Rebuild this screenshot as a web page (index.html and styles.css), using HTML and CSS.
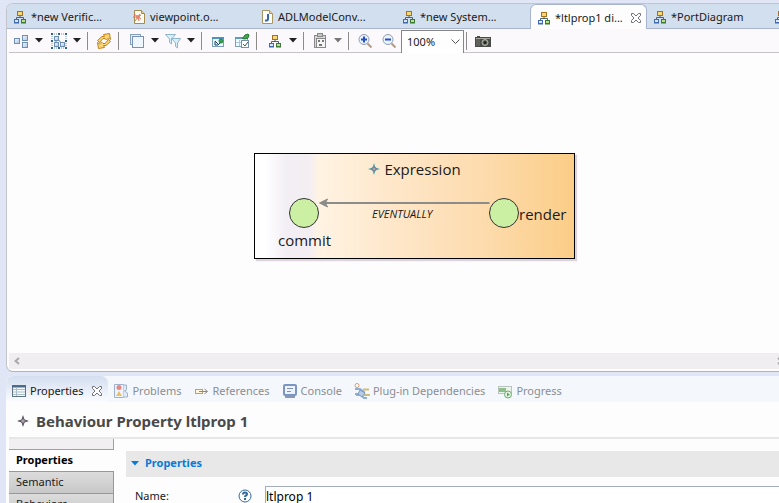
FILE: index.html
```html
<!DOCTYPE html>
<html lang="en">
<head>
<meta charset="utf-8">
<title>Diagram editor</title>
<link rel="stylesheet" href="styles.css">
</head>
<body>
<svg class="defs" aria-hidden="true">
  <defs>
    <linearGradient id="blue" x1="0" y1="0" x2="1" y2="1"><stop offset="0" stop-color="#f4f9ff"/><stop offset="1" stop-color="#a9c5e4"/></linearGradient>
    <symbol id="tree" viewBox="0 0 16 16">
      <path d="M8 6v3M4.500 11V8.500h7V11" fill="none" stroke="#4b6070"/>
      <rect x="5.500" y="2.500" width="5" height="4" fill="#f7d878" stroke="#a4711d"/>
      <rect x="2.500" y="10.500" width="4" height="3" fill="#d9e8ff" stroke="#416bb0"/>
      <rect x="9.500" y="10.500" width="4" height="3" fill="#b9df91" stroke="#3a7a35"/>
      <path d="M2 14h5" stroke="#416bb0"/><path d="M9 14h5" stroke="#3a7a35"/>
    </symbol>
    <symbol id="caret" viewBox="0 0 8 5"><path d="M0 0h8L4 4.500z" fill="currentColor"/></symbol>
    <symbol id="cross" viewBox="0 0 12 12"><path d="M1.500 1.500h2L6 4l2.500-2.500h2v2L8 6l2.500 2.500v2h-2L6 8l-2.500 2.500h-2v-2L4 6 1.500 3.500z" fill="#fff" stroke="#707078"/></symbol>
    <symbol id="star" viewBox="0 0 12 12"><path d="M6 0l1.500 4.500L12 6 7.500 7.500 6 12 4.500 7.500 0 6l4.500-1.500z" fill="currentColor"/><path d="M6 3.500L8.500 6 6 8.500 3.500 6z" fill="#a8a0ae" stroke="#716b79"/></symbol>
  </defs>
</svg>

<main class="workbench">
  <section class="editor">
    <nav class="editor-tabs">
      <button class="tab"><svg class="icon"><use href="#tree"/></svg>*new Verific...</button>
      <button class="tab"><svg class="icon" viewBox="0 0 16 16"><path d="M3.500 1.500h7l3 3v10h-10z" fill="#fffdf2" stroke="#a58b4c"/><path d="M10.500 1.500v3h3" fill="#f2d894" stroke="#a58b4c"/><path d="M10 6L7 8l2-3M7 8L3 5M7 8H2M7 8l-3 4M7 8l1 4M7 8l3 2" fill="none" stroke="#e0705d"/><circle cx="7" cy="8" r="2" fill="#e8836f"/></svg>viewpoint.o...</button>
      <button class="tab"><svg class="icon" viewBox="0 0 16 16"><path d="M3.500 1.500h7l3 3v10h-10z" fill="#fff" stroke="#aa9561"/><path d="M10.500 1.500v3h3" fill="#f2d894" stroke="#aa9561"/><path d="M9 5v5q0 2-3 1.500" fill="none" stroke="#3168a4" stroke-width="2"/></svg>ADLModelConv...</button>
      <button class="tab"><svg class="icon"><use href="#tree"/></svg>*new System...</button>
      <button class="tab tab-active"><svg class="icon"><use href="#tree"/></svg>*ltlprop1 di...<svg class="close"><use href="#cross"/></svg></button>
      <button class="tab"><svg class="icon"><use href="#tree"/></svg>*PortDiagram</button>
      <button class="tab" aria-label="More"><svg class="icon"><use href="#tree"/></svg></button>
    </nav>

    <div class="toolbar">
      <button class="tool" aria-label="Arrange"><svg class="icon" viewBox="0 0 16 16"><g fill="url(#blue)" stroke="#6f8eb5"><rect x="1.500" y="5.500" width="5" height="5"/><rect x="9.500" y="2.500" width="5" height="5"/><rect x="9.500" y="9.500" width="5" height="5"/></g></svg></button>
      <button class="drop" aria-label="Arrange options"><svg class="caret"><use href="#caret"/></svg></button>
      <button class="tool tool-spaced" aria-label="Select"><svg class="icon" viewBox="0 0 16 16"><path d="M6 5l5 6M5 6v5" stroke="#54799d"/><g fill="url(#blue)" stroke="#6f8eb5"><rect x="3.500" y="3.500" width="4" height="4"/><rect x="3.500" y="9.500" width="4" height="4"/><rect x="9.500" y="9.500" width="4" height="4"/></g><path d="M0 0h2v2H0zM7 0h2v2H7zM14 0h2v2h-2zM0 7h2v2H0zM14 7h2v2h-2zM0 14h2v2H0zM7 14h2v2H7zM14 14h2v2h-2z" fill="#315f90"/><path d="M3 1h3M10 1h3M3 15h3M10 15h3M1 3v3M1 10v3M15 3v3M15 10v3" stroke="#7894ac" stroke-dasharray="1 1"/></svg></button>
      <button class="drop" aria-label="Select options"><svg class="caret"><use href="#caret"/></svg></button>
      <span class="sep"></span>
      <button class="tool" aria-label="Refresh"><svg class="icon" viewBox="0 0 16 16"><g fill="#f9d672" stroke="#c38018"><path d="M3.500 9.500L1.500 7.500 6 3.500H8.500L7.500 1.500l6-1 1 6-2-1.500L10.500 7 9 5.500H7z"/><path d="M12.500 6.500l2 2L10 12.500H7.500l1 2-6 1-1-6 2 1.500L5.500 9 7 10.500h2z"/></g></svg></button>
      <span class="sep sep-tight"></span>
      <button class="tool" aria-label="Layers"><svg class="icon" viewBox="0 0 16 16"><rect x="1.500" y="1.500" width="10" height="10" fill="#e6effa" stroke="#879ebd"/><rect x="3.500" y="3.500" width="11" height="11" fill="#edf7fd" stroke="#7892b4"/></svg></button>
      <button class="drop" aria-label="Layer options"><svg class="caret"><use href="#caret"/></svg></button>
      <button class="tool" aria-label="Filters"><svg class="icon" viewBox="0 0 16 16"><g fill="#d9eff8" stroke="#8fb5cd"><path d="M.500 1.500h10L6.500 6v5l-2-1.500V6z"/><path d="M6.500 5.500h9L12.500 10v5l-2-1.500V10z"/></g></svg></button>
      <button class="drop" aria-label="Filter options"><svg class="caret"><use href="#caret"/></svg></button>
      <span class="sep"></span>
      <button class="tool" aria-label="Show in window"><svg class="icon" viewBox="0 0 16 16"><rect x="2.500" y="4.500" width="11" height="9" fill="#edf7ff" stroke="#7a9db9"/><path d="M2 5h12" stroke="#4f93c4" stroke-width="2"/><path d="M5 8l4 4M5 12V8.500M5 12h3l3-3" fill="none" stroke="#173f67"/><circle cx="11" cy="8" r="2" fill="#36a451" stroke="#217f42"/></svg></button>
      <button class="tool" aria-label="Pin selection"><svg class="icon" viewBox="0 0 16 16"><rect x="1.500" y="4.500" width="12" height="9" fill="#f2f9ff" stroke="#7a9db9"/><path d="M1 5h13" stroke="#5b9bca" stroke-width="2"/><path d="M5.500 7v6M2 9.500h6" stroke="#a9c8df"/><path d="M8.500 5.500L11 2l3-1 1 1-1 3-3 1z" fill="#45a64c" stroke="#267c37"/><rect x="7.500" y="7.500" width="7" height="7" fill="#fff" stroke="#7790a5"/><path d="M9 11l2 2 3-4" fill="none" stroke="#34566f"/></svg></button>
      <span class="sep sep-tight"></span>
      <button class="tool" aria-label="Hierarchy"><svg class="icon"><use href="#tree"/></svg></button>
      <button class="drop" aria-label="Hierarchy options"><svg class="caret"><use href="#caret"/></svg></button>
      <span class="sep"></span>
      <button class="tool" aria-label="Paste"><svg class="icon" viewBox="0 0 16 16"><rect x="2.500" y="2.500" width="11" height="12" fill="#d8d8d8" stroke="#8b8b8b"/><rect x="5.500" y=".5" width="5" height="3" fill="#c8c8c8" stroke="#888"/><rect x="4.500" y="5.500" width="9" height="9" fill="#f4f4f4" stroke="#888"/><path d="M6 7h2v2H6zM10 7h2v2h-2zM7 11h3v2H7z" fill="#777"/></svg></button>
      <button class="drop drop-muted" aria-label="Paste options"><svg class="caret"><use href="#caret"/></svg></button>
      <span class="sep"></span>
      <button class="tool" aria-label="Zoom in"><svg class="icon" viewBox="0 0 16 16"><path d="M10.500 10.500l4 4" stroke="#b99880" stroke-width="2"/><circle cx="7" cy="6.500" r="5" fill="#eaf4ff" stroke="#8f9dad"/><path d="M4 6.500h6M7 3.500v6" stroke="#294fc4" stroke-width="2"/></svg></button>
      <button class="tool" aria-label="Zoom out"><svg class="icon" viewBox="0 0 16 16"><path d="M10.500 10.500l4 4" stroke="#b99880" stroke-width="2"/><circle cx="7" cy="6.500" r="5" fill="#eaf4ff" stroke="#8f9dad"/><path d="M4 6.500h6" stroke="#294fc4" stroke-width="2"/></svg></button>
      <div class="zoom">
        <select aria-label="Zoom level"><option>100%</option></select>
        <svg class="chevron" viewBox="0 0 9 6"><path d="M.500 .5l4 4 4-4" fill="none" stroke="#555"/></svg>
      </div>
      <span class="sep sep-camera"></span>
      <button class="tool" aria-label="Export image"><svg class="icon" viewBox="0 0 16 16"><path d="M0 4h2V3h3v1h11v10H0z" fill="#4a4a48"/><path d="M2 6v7M4 6v7" stroke="#777"/><path d="M1 5.500h14" stroke="#a5a59c"/><circle cx="10" cy="9.500" r="3" fill="#65705f" stroke="#b1b5ac"/><circle cx="10" cy="9.500" r="1.500" fill="#222"/></svg></button>
    </div>

    <div class="canvas">
      <div class="container-node">
        <h1 class="container-title"><svg class="star star-teal"><use href="#star"/></svg>Expression</h1>
        <svg class="edge" viewBox="0 0 172 10"><path d="M4 5h168" stroke="#8c8c8a" stroke-width="2"/><path d="M10 1L2 5l8 4L8 5z" fill="#8c8c8a" stroke="#8c8c8a"/></svg>
        <span class="edge-label">EVENTUALLY</span>
        <span class="state state-commit"></span>
        <span class="state-label label-commit">commit</span>
        <span class="state state-render"></span>
        <span class="state-label label-render">render</span>
      </div>
    </div>
    <div class="scrollbar"><svg class="arrow" viewBox="0 0 6 8"><path d="M5 1L1.500 4 5 7" fill="none" stroke="#aaa" stroke-width="2"/></svg><svg class="arrow" viewBox="0 0 6 8"><path d="M1 1l3.500 3L1 7" fill="none" stroke="#aaa" stroke-width="2"/></svg></div>
  </section>

  <section class="views">
    <nav class="view-tabs">
      <button class="view-tab view-active"><svg class="icon" viewBox="0 0 16 16"><rect x="1.500" y="2.500" width="13" height="11" fill="#f4faff" stroke="#5f7384"/><path d="M1 3.500h14" stroke="#496985" stroke-width="2"/><path d="M5.500 4v9M2 6.500h12M2 9h12M2 11.500h12" stroke="#a9bdca"/></svg>Properties<svg class="close"><use href="#cross"/></svg></button>
      <button class="view-tab"><svg class="icon" viewBox="0 0 16 16"><path d="M1.500 1.500h9v13h-9z" fill="#eef4fb" stroke="#9eb2ce"/><path d="M10.500 2h3v5l-2 1 3 2v4h-4" fill="#e1ebf6" stroke="#9eb2ce"/><circle cx="6" cy="4.500" r="2.500" fill="#e88782"/><path d="M6 8l3 5H3z" fill="#efbd63"/></svg>Problems</button>
      <button class="view-tab"><svg class="icon" viewBox="0 0 16 16"><rect x="2.500" y="6.500" width="7" height="4" fill="#fff6dd" stroke="#b9a176"/><path d="M6 8.500h8M11.500 6l3 2.500-3 2.500" fill="none" stroke="#8c8b82"/></svg>References</button>
      <button class="view-tab"><svg class="icon" viewBox="0 0 16 16"><rect x="2" y="2" width="12" height="10" rx="1" fill="#edf4ff" stroke="#7b96c2" stroke-width="2"/><path d="M5 5.500h6M5 8.500h4" stroke="#8091ad"/><path d="M3 14h10" stroke="#8999b5" stroke-width="2"/></svg>Console</button>
      <button class="view-tab"><svg class="icon" viewBox="0 0 16 16"><circle cx="3" cy="2.500" r="2" fill="#fff" stroke="#d29b77"/><path d="M9 6.500h6M10 12h6" fill="none" stroke="#d2bb78" stroke-width="2"/><path d="M1 6h5l4 3-2 2H1M2 12h5l3 3h3" fill="none" stroke="#8eaed3" stroke-width="2"/><path d="M6 7l5 3-3 4-4-3z" fill="#b5cde8" stroke="#7899bf"/></svg>Plug-in Dependencies</button>
      <button class="view-tab"><svg class="icon" viewBox="0 0 16 16"><rect x="1.500" y="3.500" width="13" height="7" fill="#eef3ec" stroke="#b9c4bd"/><path d="M2 5h7v4H2z" fill="#8dbe8c"/><circle cx="11" cy="11.500" r="3.500" fill="#e6f5e2" stroke="#68ad70"/><path d="M10 9.500l3 2-3 2z" fill="#57a461"/></svg>Progress</button>
    </nav>

    <h2 class="view-title"><svg class="star star-dark"><use href="#star"/></svg>Behaviour Property ltlprop 1</h2>

    <div class="sheet">
      <nav class="side-tabs">
        <span class="side-head"></span>
        <button class="side-tab side-active">Properties</button>
        <button class="side-tab">Semantic</button>
        <button class="side-tab">Behaviors</button>
      </nav>
      <div class="form">
        <button class="section-head"><svg class="caret"><use href="#caret"/></svg>Properties</button>
        <div class="field">
          <label for="name">Name:</label>
          <svg class="help" viewBox="0 0 14 14"><circle cx="7" cy="7" r="6" fill="#fff" stroke="#316a9c"/><path d="M5 5.500q0-2 2-2t2 1.500q0 1-1 1.500T7 8" fill="none" stroke="#316a9c" stroke-width="2"/><path d="M6 9h2v2H6z" fill="#316a9c"/></svg>
          <input id="name" type="text" value="ltlprop 1">
        </div>
      </div>
    </div>
  </section>
</main>
</body>
</html>
```
FILE: styles.css
```css
* { box-sizing: border-box; }

body {
  margin: 0;
  height: 100vh;
  overflow: hidden;
  background: #e0e6f5;
  color: #1a1a1a;
  font: 11px/16px "Noto Sans", "Open Sans", sans-serif;
}

button, input, select {
  margin: 0;
  padding: 0;
  border: 0;
  border-radius: 0;
  background: none;
  color: inherit;
  font: inherit;
  text-align: left;
}

svg { display: block; flex: none; }
.defs { position: absolute; width: 0; height: 0; }
.icon { width: 16px; height: 16px; }
.close { width: 12px; height: 12px; margin-left: 8px; }

.workbench {
  display: flex;
  flex-direction: column;
  gap: 4px;
  height: 100vh;
  padding: 3px 0 0 6px;
}

.editor {
  display: flex;
  flex-direction: column;
  flex: 1;
  min-height: 0;
  border: 1px solid #c3c4cb;
  border-right: 0;
  border-bottom-color: #b5b3b5;
  border-radius: 7px 0 0 7px;
  background: #fdfdfd;
  overflow: hidden;
}

.editor-tabs {
  display: grid;
  grid-template-columns: 119px 128px 142px 134px 117px 121px 1fr;
  height: 25px;
  background: #d2dfee;
  border-bottom: 1px solid #a9b5cf;
}

.tab {
  display: flex;
  align-items: center;
  gap: 3px;
  min-width: 0;
  padding: 1px 0 0 5px;
  overflow: hidden;
  white-space: nowrap;
}

.tab-active {
  height: 25px;
  border: 1px solid #a9b5cf;
  border-bottom: 0;
  border-radius: 6px 6px 0 0;
  background: #fdfdfd;
}
.tab-active .close { margin-left: 4px; }

.toolbar {
  display: flex;
  align-items: center;
  height: 24px;
  margin-left: 2px;
  border-bottom: 1px solid #c5c3c6;
  background: #fbf9fc;
}

.tool { display: flex; justify-content: center; width: 24px; }
.tool-spaced { margin-left: 2px; }
.drop { display: flex; justify-content: center; width: 12px; color: #222; }
.drop-muted { color: #777; }
.caret { width: 8px; height: 5px; }
.sep { width: 1px; height: 18px; margin: 0 4px; background: #8f8d8a; }
.sep-tight { margin: 0 6px 0 2px; }
.sep-camera { margin-left: 2px; }

.zoom { position: relative; align-self: stretch; width: 63px; padding-top: 1px; }
.zoom select {
  width: 100%;
  height: 23px;
  padding: 0 5px;
  appearance: none;
  border: 1px solid #85858a;
  border-bottom: 0;
  background: #fff;
}
.chevron { position: absolute; right: 4px; top: 10px; width: 9px; height: 6px; pointer-events: none; }

.canvas { position: relative; flex: 1; min-height: 0; }

.container-node {
  position: absolute;
  left: 247px;
  top: 100px;
  width: 321px;
  height: 106px;
  border: 1px solid #000;
  background: linear-gradient(90deg, #fff 0, #fff 3%, #f2eef4 10%, #f3eef2 17%, #fff3e3 20%, #fee6c7 45%, #fddcaf 70%, #fbcd87 100%);
  box-shadow: 2px 2px 1px #ddd3dc;
  font-family: "Open Sans", "Noto Sans", sans-serif;
  font-size: 15px;
  line-height: 20px;
}

.container-title {
  display: flex;
  align-items: center;
  justify-content: center;
  gap: 4px;
  margin: 5px 0 0;
  font-size: 15px;
  font-weight: 400;
}

.star { width: 12px; height: 12px; }
.star-teal { color: #45adb5; }
.star-dark { color: #514757; }

.edge { position: absolute; left: 62px; top: 44px; width: 173px; height: 10px; }
.edge-label { position: absolute; left: 117px; top: 52px; font-size: 11px; line-height: 16px; font-style: italic; }
.state { position: absolute; top: 44px; width: 30px; height: 30px; border: 1px solid #333; border-radius: 50%; background: #ccf0a3; }
.state-commit { left: 34px; }
.state-render { left: 234px; }
.state-label { position: absolute; }
.label-commit { left: 23px; top: 76px; }
.label-render { left: 264px; top: 50px; }

.scrollbar {
  display: flex;
  justify-content: space-between;
  align-items: center;
  height: 16px;
  margin: 0 0 2px 2px;
  padding-left: 5px;
  background: #f0eef1;
}
.arrow { width: 6px; height: 8px; }
.arrow:last-child { margin-right: -4px; }

.views {
  flex: none;
  height: 127px;
  overflow: hidden;
  border-radius: 7px 0 0 0;
  background: #fdfdfd;
}

.view-tabs {
  display: flex;
  height: 26px;
  background: #f4f8fc;
  color: #8b8d93;
}
.view-tab {
  display: flex;
  align-items: center;
  gap: 3px;
  padding: 3px 7px 0 5px;
  white-space: nowrap;
}
.view-active {
  padding-right: 5px;
  border-radius: 7px 7px 0 0;
  background: linear-gradient(#d4def0, #fbfcff);
  color: #1a1a1a;
}
.view-active .close { margin-left: 5px; }

.view-title {
  display: flex;
  align-items: center;
  gap: 7px;
  height: 37px;
  margin: 0 0 0 3px;
  padding: 3px 0 0 8px;
  border-bottom: 2px solid #e8e7e8;
  color: #494949;
  font-size: 15px;
  line-height: 20px;
  font-weight: 700;
}

.sheet { display: grid; grid-template-columns: 105px 1fr; gap: 12px; padding-left: 3px; }
.side-tabs { display: flex; flex-direction: column; }
.side-head { height: 11px; border: 1px solid #9aa59a; border-width: 0 1px 1px 0; background: #f2eff3; }
.side-tab {
  height: 22px;
  padding: 0 0 2px 7px;
  border: 1px solid #989898;
  border-width: 1px 1px 0 0;
  background: linear-gradient(#dcdcdc, #c8c8c8);
}
.side-active { height: 21px; border: 0; background: none; font-weight: 700; color: #000; }

.form { padding-top: 12px; }
.section-head {
  display: flex;
  align-items: center;
  gap: 6px;
  width: 100%;
  height: 26px;
  padding: 0 0 2px 5px;
  background: #e8e8e8;
  color: #087bd8;
  font-weight: 700;
}
.field { display: grid; grid-template-columns: 103px 27px 1fr; align-items: center; margin-top: 9px; padding-left: 9px; }
.help { width: 14px; height: 14px; }
.field input { height: 20px; min-width: 0; padding: 0; border: 1px solid #a3adbf; border-right: 0; background: #fff; color: #000; font-size: 12px; }
```
